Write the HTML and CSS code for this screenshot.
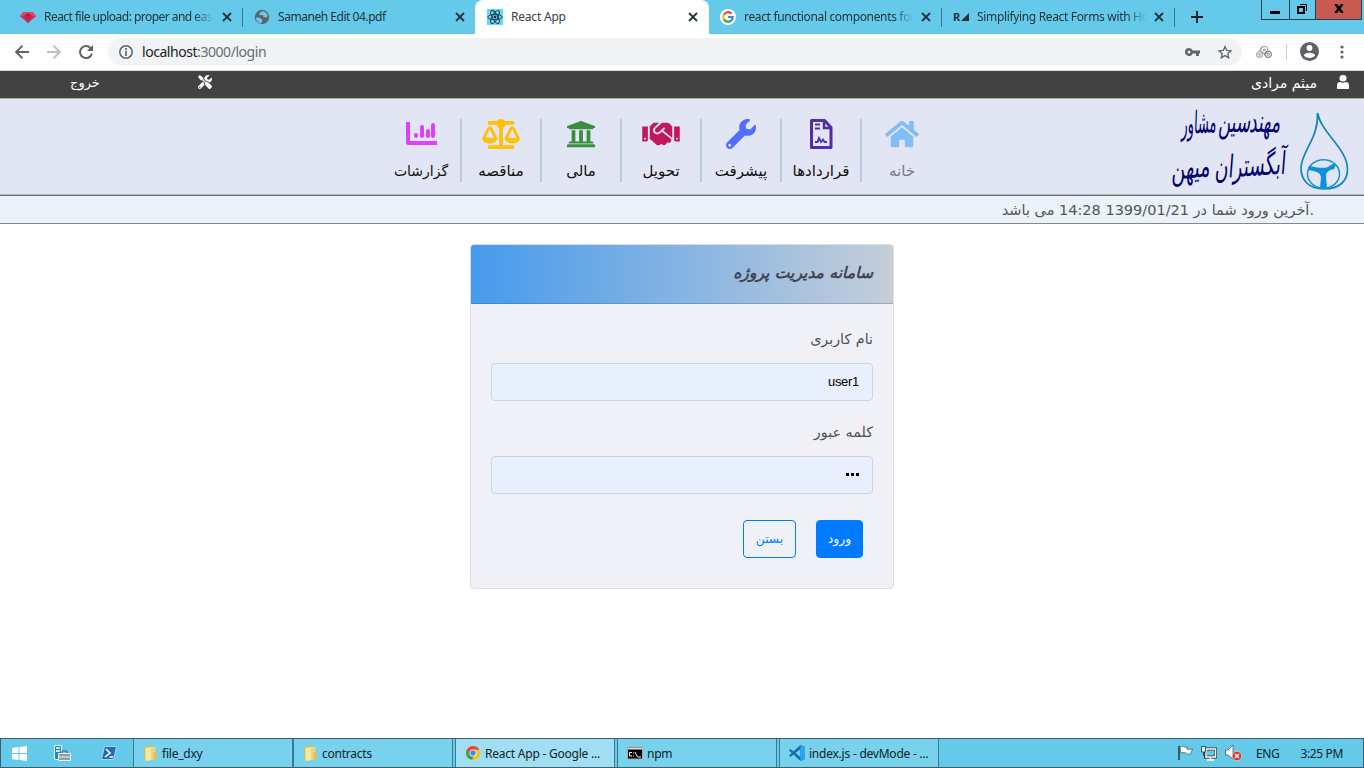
FILE: index.html
```html
<!DOCTYPE html>
<html lang="fa">
<head>
<meta charset="utf-8">
<title>React App</title>
<link rel="stylesheet" href="styles.css">
</head>
<body>
<div class="tabstrip">
  <div class="tab first"><svg class="fav" viewBox="0 0 16 16"><path fill="#e5416b" d="M3 3h10l3 4-8 7-8-7z"/><path fill="#a51d41" d="M4 7l4-3 4 3-4 7z"/><path fill="#c62c51" d="M0 7h16l-8 7z" opacity=".7"/></svg><span class="tab-title t1 fade">React file upload: proper and eas</span><svg class="x" viewBox="0 0 10 10"><path d="M1 1l8 8M9 1L1 9"/></svg></div>
  <div class="tab sep"><svg class="fav" viewBox="0 0 16 16"><circle cx="8" cy="8" r="7.2" fill="#5f6368"/><path fill="#65c9ea" d="M2 8.5l4 .2 2 1.8v2.5l-1 1.3C4 14 2 11.800 2 8.500zM8 2.200c3 0 5.500 2 5.800 5L12 8.500 9.500 8 9 6 6 6.200 5 4.500z"/></svg><span class="tab-title t2">Samaneh Edit 04.pdf</span><svg class="x" viewBox="0 0 10 10"><path d="M1 1l8 8M9 1L1 9"/></svg></div>
  <div class="tab active"><svg class="fav" viewBox="0 0 16 16"><path fill="#61dafb" d="M0 0h16v16H0z"/><g fill="none" stroke="#20313c" stroke-width=".9"><ellipse cx="8" cy="8" rx="7.200" ry="2.700"/><ellipse cx="8" cy="8" rx="7.200" ry="2.700" transform="rotate(60 8 8)"/><ellipse cx="8" cy="8" rx="7.200" ry="2.700" transform="rotate(120 8 8)"/></g><circle cx="8" cy="8" r="1.400" fill="#20313c"/></svg><span class="tab-title t3">React App</span><svg class="x" viewBox="0 0 10 10"><path d="M1 1l8 8M9 1L1 9"/></svg></div>
  <div class="tab"><svg class="fav" viewBox="0 0 16 16"><circle cx="8" cy="8" r="8" fill="#fff"/><g fill="none" stroke-width="2.200"><path stroke="#ea4335" d="M3.900 5.800A4.700 4.700 0 0 1 11.500 4.700"/><path stroke="#fbbc05" d="M3.900 5.600a4.700 4.700 0 0 0 0 4.800"/><path stroke="#34a853" d="M3.900 10.200a4.700 4.700 0 0 0 7.200 1.500"/><path stroke="#4285f4" d="M8 8h4.700a4.700 4.700 0 0 1-1.800 3.800"/></g></svg><span class="tab-title t4 fade">react functional components for</span><svg class="x" viewBox="0 0 10 10"><path d="M1 1l8 8M9 1L1 9"/></svg></div>
  <div class="tab sep"><span class="fav ra">R<svg viewBox="0 0 8 8"><path fill="#26343a" d="M8 0v8H0z"/></svg></span><span class="tab-title t5 fade">Simplifying React Forms with Ho</span><svg class="x" viewBox="0 0 10 10"><path d="M1 1l8 8M9 1L1 9"/></svg></div>
  <div class="newtab"><svg width="12" height="12" viewBox="0 0 12 12"><path d="M6 0v12M0 6h12" stroke="#202124" stroke-width="2"/></svg></div>
  <div class="wincontrols">
    <span class="min"><svg width="10" height="12" viewBox="0 0 10 12"><path d="M0 8h10v3H0z"/></svg></span>
    <span class="max"><svg width="10" height="10" viewBox="0 0 10 10"><path fill="none" stroke="#000" d="M3 .5h6.500V7"/><path fill="none" stroke="#000" stroke-width="2" d="M1 3h6v6H1z"/></svg></span>
    <span class="close"><svg width="10" height="9" viewBox="0 0 10 9"><path stroke="#000" stroke-width="2.600" d="M1.500 0l7 9M8.500 0l-7 9"/></svg></span>
  </div>
</div>
<div class="toolbar">
  <svg class="back" width="14" height="14" viewBox="0 0 14 14"><path d="M14 7H1.500M7.500.7L1.200 7l6.300 6.300" fill="none" stroke="#5f6368" stroke-width="1.900"/></svg>
  <svg class="fwd" width="14" height="14" viewBox="0 0 14 14"><path d="M0 7h12.500M6.500.7L12.800 7l-6.300 6.300" fill="none" stroke="#bcbec0" stroke-width="1.900"/></svg>
  <svg class="reload" width="14" height="14" viewBox="0 0 14 14"><path d="M11.600 3.100A6 6 0 1 0 12.900 8.500" fill="none" stroke="#5f6368" stroke-width="2"/><path fill="#5f6368" d="M14 0v6H8z"/></svg>
  <div class="omnibox">
    <svg class="info" width="14" height="14" viewBox="0 0 14 14"><circle cx="7" cy="7" r="6.200" fill="none" stroke="#5f6368" stroke-width="1.500"/><path d="M7 6v5M7 3v2" stroke="#5f6368" stroke-width="1.700"/></svg>
    <span class="url"><b>localhost</b>:3000/login</span>
    <svg class="key" width="15" height="8" viewBox="0 0 15 8"><path fill="#5f6368" fill-rule="evenodd" d="M4 0a4 4 0 0 1 3.700 2.600H15v2.900h-1.200V8H11V5.500H7.700A4 4 0 1 1 4 0zm0 2.500a1.500 1.500 0 1 0 0 3 1.500 1.500 0 0 0 0-3z"/></svg>
    <svg width="14" height="14" viewBox="0 0 14 14"><path fill="none" stroke="#5f6368" stroke-width="1.300" d="M7 1.500l1.700 3.900 4.300.4-3.200 2.800.9 4.200L7 10.600l-3.700 2.200.9-4.200L1 5.800l4.300-.4z"/></svg>
  </div>
  <svg class="ext" width="16" height="12" viewBox="0 0 16 12"><g fill="none" stroke="#a2a2a2" stroke-width="1.100"><circle cx="8.300" cy="4" r="3.500"/><circle cx="8.300" cy="4" r="1"/><path d="M3.500 5.500C4 3.500 5 1.500 7 .8M6 5.500l4 5"/><circle cx="3.500" cy="8.500" r="2.800"/><circle cx="3.500" cy="8.500" r=".8"/><circle cx="12.300" cy="8.300" r="3.100" stroke="#777"/><circle cx="12.300" cy="8.300" r="1.200"/></g></svg>
  <span class="vline"></span>
  <svg class="avatar" width="19" height="19" viewBox="0 0 19 19"><circle cx="9.500" cy="9.500" r="9.500" fill="#5f6368"/><circle cx="9.500" cy="6" r="2.900" fill="#fff"/><path fill="#fff" d="M3.800 13.300c1-3.400 10.400-3.400 11.400 0-2.400 3.700-9 3.700-11.400 0z"/></svg>
  <svg class="dots" width="4" height="14" viewBox="0 0 4 14"><g fill="#5f6368"><circle cx="2" cy="2" r="1.600"/><circle cx="2" cy="7" r="1.600"/><circle cx="2" cy="12" r="1.600"/></g></svg>
</div>
<div class="userbar">
  <span class="logout" dir="rtl">خروج</span>
  <svg class="tools" viewBox="0 0 512 512"><path d="M501.100 395.700L384 278.600c-23.100-23.100-57.600-27.600-85.400-13.900L192 158.100V96L64 0 0 64l96 128h62.100l106.600 106.600c-13.600 27.800-9.200 62.300 13.900 85.400l117.100 117.100c14.600 14.600 38.200 14.600 52.700 0l52.700-52.700c14.500-14.600 14.500-38.200 0-52.700zM331.700 225c28.300 0 54.900 11 74.900 31l19.400 19.400c15.800-6.900 30.800-16.500 43.800-29.500 37.100-37.100 49.700-89.300 37.900-136.700-2.200-9-13.500-12.100-20.100-5.500l-74.400 74.400-67.900-11.300L334 98.900l74.400-74.400c6.600-6.600 3.400-17.900-5.700-20.200-47.400-11.700-99.600.9-136.600 37.900-28.500 28.500-41.900 66.100-41.200 103.600l82.100 82.100c8.100-1.900 16.500-2.900 24.700-2.900zm-103.900 82l-56.700-56.700L18.700 402.800c-25 25-25 65.500 0 90.500s65.500 25 90.500 0l123.600-123.600c-7.600-19.900-9.900-41.600-5-62.700zM64 472c-13.200 0-24-10.800-24-24 0-13.300 10.700-24 24-24s24 10.700 24 24c0 13.200-10.700 24-24 24z"/></svg>
  <span class="username" dir="rtl">میثم مرادی</span>
  <svg class="user" width="12" height="14" viewBox="0 0 12 14"><ellipse cx="6" cy="3.200" rx="3.500" ry="3.200" fill="#fff"/><path fill="#fff" d="M0 14v-3.500Q0 7 3 7q3 1.400 6 0 3 0 3 3.500V14z"/></svg>
</div>
<header class="header">
  <nav class="nav">
    <a class="item reports"><svg width="32" height="28" viewBox="0 -2 32 28"><g fill="none" stroke="#e040fb" stroke-linecap="round" stroke-width="4"><path d="M3 3v19h27" stroke-linecap="square" stroke-linejoin="round"/><path d="M11 14v1M17 6v9M23 10v5M28 4v11"/></g></svg><span>گزارشات</span></a>
    <a class="item"><svg width="38" height="30" viewBox="0 0 640 512" fill="#ffc107"><path d="M256 336h-.02c0-16.180 1.340-8.730-85.050-181.510-17.650-35.290-68.190-35.360-85.870 0C-2.060 328.750.02 320.330.02 336H0c0 44.180 57.310 80 128 80s128-35.820 128-80zM128 176l72 144H56l72-144zm511.980 160c0-16.180 1.340-8.730-85.050-181.510-17.650-35.290-68.190-35.360-85.870 0-87.120 174.260-85.040 165.840-85.040 181.510H384c0 44.180 57.310 80 128 80s128-35.820 128-80h-.02zM440 320l72-144 72 144H440zm88 128H352V153.250c23.510-10.290 41.160-31.480 46.390-57.250H528c8.840 0 16-7.160 16-16V48c0-8.840-7.160-16-16-16H383.640C369.040 12.680 346.090 0 320 0s-49.040 12.680-63.640 32H112c-8.840 0-16 7.160-16 16v32c0 8.840 7.160 16 16 16h129.610c5.230 25.760 22.870 46.960 46.390 57.250V448H112c-8.840 0-16 7.160-16 16v32c0 8.840 7.160 16 16 16h416c8.840 0 16-7.160 16-16v-32c0-8.840-7.160-16-16-16z"/></svg><span>مناقصه</span></a>
    <a class="item"><svg width="30" height="30" viewBox="0 0 512 512" fill="#388e3c"><path d="M496 128v16a8 8 0 0 1-8 8h-24v12c0 6.627-5.373 12-12 12H60c-6.627 0-12-5.373-12-12v-12H24a8 8 0 0 1-8-8v-16a8 8 0 0 1 4.941-7.392l232-88a7.996 7.996 0 0 1 6.118 0l232 88A8 8 0 0 1 496 128zm-24 304H40c-13.255 0-24 10.745-24 24v16a8 8 0 0 0 8 8h464a8 8 0 0 0 8-8v-16c0-13.255-10.745-24-24-24zM96 192v192H60c-6.627 0-12 5.373-12 12v20h416v-20c0-6.627-5.373-12-12-12h-36V192h-64v192h-64V192h-64v192h-64V192H96z"/></svg><span>مالی</span></a>
    <a class="item"><svg width="38" height="30" viewBox="0 0 640 512" fill="#c2185b"><path d="M434.700 64h-85.900c-8 0-15.700 3-21.600 8.400l-98.300 90c-.1.1-.2.3-.3.4-16.600 15.600-16.300 40.500-2.100 56 12.700 13.900 39.400 17.600 56.100 2.700.1-.1.3-.1.4-.2l79.900-73.200c6.500-5.900 16.700-5.500 22.600 1 6 6.500 5.500 16.600-1 22.600l-26.100 23.900L504 313.800c2.900 2.400 5.500 5 7.900 7.700V128l-54.600-54.600c-5.900-6-14.100-9.400-22.600-9.400zM544 128.200v223.900c0 17.700 14.300 32 32 32h64V128.200h-96zm48 223.900c-8.800 0-16-7.200-16-16s7.200-16 16-16 16 7.200 16 16-7.200 16-16 16zM0 384h64c17.700 0 32-14.300 32-32V128.200H0V384zm48-63.900c8.800 0 16 7.200 16 16s-7.200 16-16 16-16-7.200-16-16c0-8.900 7.200-16 16-16zm435.900 18.600L334.600 217.500l-30 27.500c-29.700 27.100-75.200 24.500-101.700-4.400-26.900-29.400-24.800-74.900 4.400-101.700L289.100 64h-83.800c-8.500 0-16.600 3.400-22.600 9.400L128 128v223.900h18.300l90.500 81.900c27.400 22.300 67.700 18.100 90-9.300l.2-.2 17.900 15.500c15.900 13 39.400 10.500 52.300-5.400l31.400-38.600 5.400 4.400c13.700 11.100 33.900 9.100 45-4.700l9.500-11.700c11.200-13.800 9.100-33.900-4.600-45.100z"/></svg><span>تحویل</span></a>
    <a class="item"><svg width="30" height="30" viewBox="0 0 512 512" fill="#536dfe"><path d="M507.730 109.100c-2.240-9.030-13.540-12.090-20.120-5.510l-74.360 74.360-67.880-11.310-11.310-67.880 74.360-74.360c6.620-6.620 3.430-17.900-5.660-20.160-47.380-11.740-99.550.91-136.580 37.930-39.640 39.640-50.550 97.100-34.050 147.200L18.740 402.760c-24.990 24.990-24.990 65.510 0 90.500 24.990 24.990 65.510 24.990 90.500 0l213.210-213.210c50.120 16.710 107.470 5.680 147.370-34.220 37.070-37.070 49.700-89.320 37.910-136.730zM64 472c-13.250 0-24-10.750-24-24 0-13.260 10.750-24 24-24s24 10.740 24 24c0 13.250-10.750 24-24 24z"/></svg><span>پیشرفت</span></a>
    <a class="item"><svg width="24" height="30" viewBox="0 0 24 30" fill="none" stroke="#512da8"><path stroke-width="3" stroke-linejoin="round" d="M2.500 1.500h13l6.500 7v20H2.500z"/><path stroke-width="2.500" d="M15 1.500v7.500h7"/><path stroke-width="1.800" d="M6 5.500h5M6 9.500h5M6 23h2.500l1.500-4 2 4 2-2.500 1.500 2.500h2.500"/></svg><span>قراردادها</span></a>
    <a class="item home"><svg width="34" height="30" viewBox="0 0 576 512" fill="#82bdf5"><path d="M280.370 148.260L96 300.110V464a16 16 0 0 0 16 16l112.060-.29a16 16 0 0 0 15.920-16V368a16 16 0 0 1 16-16h64a16 16 0 0 1 16 16v95.640a16 16 0 0 0 16 16.050L464 480a16 16 0 0 0 16-16V300L295.670 148.260a12.190 12.190 0 0 0-15.300 0zM571.600 251.470L488 182.560V44.050a12 12 0 0 0-12-12h-56a12 12 0 0 0-12 12v72.610L318.470 43a48 48 0 0 0-61 0L4.340 251.470a12 12 0 0 0-1.600 16.900l25.500 31A12 12 0 0 0 45.150 301l235.220-193.740a12.190 12.190 0 0 1 15.300 0L530.900 301a12 12 0 0 0 16.900-1.600l25.500-31a12 12 0 0 0-1.700-16.930z"/></svg><span>خانه</span></a>
  </nav>
  <svg class="logo" width="190" height="92" viewBox="1164 100 190 92">
    <g class="calligraphy">
      <text x="1280" y="132" textLength="31" lengthAdjust="spacingAndGlyphs">مهند</text>
      <text x="1250" y="132" textLength="32" lengthAdjust="spacingAndGlyphs">سین</text>
      <text x="1216" y="132" textLength="35" lengthAdjust="spacingAndGlyphs" transform="rotate(-4 1216 128)">مشاور</text>
      <text x="1285" y="176" textLength="71" lengthAdjust="spacingAndGlyphs" transform="rotate(-4 1250 170)">آبگستران</text>
      <text x="1210" y="176" textLength="39" lengthAdjust="spacingAndGlyphs" transform="rotate(-6 1210 175)">میهن</text>
    </g>
    <path fill="none" stroke="#0c86bb" stroke-width="1.700" d="M1317.500 113c4 20 30 36 30 56 0 12-8 20-23.500 20s-23-9-23-21c0-16 18-30 16.500-55z"/>
    <ellipse cx="1323.500" cy="174" rx="16" ry="14.300" fill="none" stroke="#1794d6" stroke-width="1.500"/>
    <path fill="#0c8fdc" d="M1309 166c7 1 13 3 19 1 4-3 6-4 8-2l-2 4c-5 1-8 3-8 7l1 12h-7l1-10c0-6-6-7-13-8z"/>
  </svg>
</header>
<div class="lastlogin"><span class="ll">آخرین ورود شما در <bdi>14:28 1399/01/21</bdi> می باشد</span></div>
<main class="page">
  <section class="card" dir="rtl">
    <h5 class="card-header"><span>سامانه مدیریت پروژه</span></h5>
    <div class="card-body">
      <label>نام کاربری</label>
      <div class="input">user1</div>
      <label>کلمه عبور</label>
      <div class="input pass"><i></i><i></i><i></i></div>
      <div class="buttons"><button class="btn primary">ورود</button><button class="btn outline">بستن</button></div>
    </div>
  </section>
</main>
<footer class="taskbar">
  <div class="quick">
    <svg width="15" height="15" viewBox="0 0 15 15"><path fill="#fff" d="M0 2l6.500-.9V7H0zM7.500 1L15 0v7H7.500zM0 8h6.500v5.900L0 13zM7.500 8H15v7l-7.500-1z"/></svg>
    <svg width="17" height="17" viewBox="0 0 17 17"><path fill="#1c86bd" stroke="#e8f8ff" d="M.5.5h7v14h-7z"/><path stroke="#fff" stroke-width="1.500" d="M2 3h4M2 6h4"/><path fill="none" stroke="#43586a" d="M8 8V6h5v2"/><path fill="#8da0af" stroke="#eee" d="M4.500 8.500h12v7h-12z"/><path stroke="#eee" d="M4 12h12"/></svg>
    <svg width="16" height="14" viewBox="0 0 16 14"><path fill="#236bb3" stroke="#a8d3ef" d="M3.500.5h12l-3 13H.5z"/><path fill="none" stroke="#fff" stroke-width="1.600" d="M5 3l4 4-5 4M8.500 11H12"/></svg>
  </div>
  <div class="task"><svg class="folder" viewBox="0 0 14 16"><path fill="#e2b94d" d="M1 2l6-2v15l-6 1z"/><path fill="#f9e7a0" d="M2 3l6-1v13l-6 1z"/><path fill="#f4d477" d="M8 2h4v12l-4 1z"/><path fill="#e7bd54" d="M10 7h3v7l-3 1z"/></svg><span>file_dxy</span></div>
  <div class="task"><svg class="folder" viewBox="0 0 14 16"><path fill="#e2b94d" d="M1 2l6-2v15l-6 1z"/><path fill="#f9e7a0" d="M2 3l6-1v13l-6 1z"/><path fill="#f4d477" d="M8 2h4v12l-4 1z"/><path fill="#e7bd54" d="M10 7h3v7l-3 1z"/></svg><span>contracts</span></div>
  <div class="task current"><svg viewBox="0 0 16 16"><circle cx="8" cy="8" r="7" fill="#fbc116"/><path fill="#ea4335" d="M1.900 4.600A7 7 0 0 1 14.200 4.700H8L4.900 9.500z"/><path fill="#34a853" d="M1.900 4.600L5.200 10 8.500 11 7.200 15A7 7 0 0 1 1.900 4.600z"/><circle cx="8" cy="8" r="3.500" fill="#fff"/><circle cx="8" cy="8" r="2.700" fill="#4285f4"/></svg><span>React App - Google ...</span></div>
  <div class="task"><svg viewBox="0 0 16 13"><path fill="#000" stroke="#aaa" d="M.5.5h15v12H.5z"/><path fill="#ddd" d="M1 1h14v2H1z"/><path fill="none" stroke="#fff" d="M5 6H2.500v3.500H5M6.500 6v1M6.500 9v1M8 5.500l2.500 5M11 10.500h3"/></svg><span>npm</span></div>
  <div class="task"><svg viewBox="0 0 16 16"><path fill="#0f72b5" d="M11.500 0L16 2v12l-4.500 2L1 6.500 0 5l1.500-1 10 8V4l-10 8L0 11l1-1.500z"/><path fill="#2ca5e8" d="M11.500 0L16 2v12l-4.500 2z"/></svg><span>index.js - devMode - ...</span></div>
  <div class="tray">
    <svg width="15" height="14" viewBox="0 0 15 14"><path stroke="#333" stroke-width="1.500" d="M1 0v14"/><path fill="#fff" stroke="#44606c" stroke-width=".8" d="M2 1c3-2 4 1 7 0v2c2 1 4 0 5.500 0-1 2-1 3-2 5-3 1-4-1-5-1-2-1-3 0-5 0z"/></svg>
    <svg width="16" height="15" viewBox="0 0 16 15"><path fill="#65c9ea" stroke="#333" stroke-width="3" d="M4.500 3h10v8h-10z"/><path fill="none" stroke="#fff" stroke-width="1.500" d="M5 3h9.500v8H5zM9.500 11v2.500M6 14h7"/><path fill="#dff4fc" stroke="#333" stroke-width=".8" d="M.5.5h4V6h-4zM2.500 6v4"/></svg>
    <svg width="17" height="16" viewBox="0 0 17 16"><path fill="#fff" stroke="#555" stroke-width=".8" d="M.5 5H3l5-5v14L3 10H.5z"/><circle cx="12" cy="11" r="4.700" fill="#d33" stroke="#fff" stroke-width=".5"/><path stroke="#fff" stroke-width="1.500" d="M10 9l4 4M14 9l-4 4"/></svg>
    <span class="lang">ENG</span><span class="clock">3:25 PM</span>
  </div>
</footer>
</body>
</html>
```
FILE: styles.css
```css
* { box-sizing: border-box; }
body { margin: 0; width: 1364px; height: 768px; overflow: hidden; display: flex; flex-direction: column; background: #fff; font-family: "DejaVu Sans", sans-serif; }
svg { display: block; flex: none; }
.tabstrip, .toolbar, .taskbar { font-family: "Noto Sans", "Open Sans", sans-serif; }
.tabstrip { display: flex; height: 34px; flex: none; background: #65c9ea; padding-left: 9px; }
.tab { display: flex; width: 233px; height: 34px; align-items: center; padding-left: 12px; color: #20343c; font-size: 12px; }
.tab.first { padding-left: 11px; }
.tab.sep { background: linear-gradient(#39788f, #39788f) 0 8px / 1px 19px no-repeat; }
.tab.active { background: #fff; border-radius: 8px 8px 0 0; color: #3c4043; width: 234px; margin-right: -1px; }
.fav { width: 16px; height: 16px; margin-right: 8px; flex: none; }
.ra { display: flex; align-items: center; gap: 1px; font: 700 11px/16px "Noto Sans", sans-serif; }
.ra svg { width: 8px; height: 8px; }
.tab-title { width: 170px; flex: none; white-space: nowrap; line-height: 18px; }
.t1 { letter-spacing: -0.53px; }
.t2 { letter-spacing: -0.46px; }
.t3 { letter-spacing: -0.2px; }
.t4 { letter-spacing: -0.34px; }
.t5 { letter-spacing: -0.34px; }
.fade { mask-image: linear-gradient(90deg, #000 88%, transparent); }
.x { width: 10px; height: 10px; margin-left: 7px; stroke: #20343c; stroke-width: 1.8; }
.first .x { margin-left: 8px; }
.newtab { display: flex; align-items: center; width: 87px; padding-left: 17px; background: linear-gradient(#39788f, #39788f) 0 8px / 1px 19px no-repeat; }
.wincontrols { display: flex; height: 20px; width: 101px; border: 1px solid #23424d; border-top: 0; }
.wincontrols span { display: flex; align-items: center; justify-content: center; padding-bottom: 2px; }
.wincontrols .min { width: 27px; padding-right: 1px; }
.wincontrols .max { width: 27px; padding-right: 1px; border: solid #23424d; border-width: 0 1px; }
.wincontrols .close { flex: 1; background: #c75b51; }
.toolbar { display: flex; align-items: center; height: 37px; flex: none; padding: 0 20px 1px 15px; border-bottom: 1px solid #d5d7d9; }
.fwd { margin-left: 18px; }
.reload { margin-left: 18px; }
.omnibox { display: flex; align-items: center; width: 1135px; height: 28px; margin-left: 15px; border-radius: 14px; background: #f1f3f4; padding: 0 10px 0 11px; }
.url { flex: 1; margin-left: 9px; font-size: 14px; line-height: 20px; letter-spacing: -0.45px; color: #696d71; }
.url b { font-weight: 400; color: #202124; }
.key { margin-right: 18px; }
.ext { margin-left: 14px; }
.vline { width: 1px; height: 16px; margin-left: 14px; background: #ccc; }
.avatar { margin-left: 13px; }
.dots { margin-left: 21px; }
.userbar { display: flex; height: 28px; flex: none; background: #424242; border-bottom: 1px solid #aaa; color: #fff; fill: #fff; padding: 3px 15px 0 70px; font-size: 14px; line-height: 18px; }
.logout { width: 128px; direction: ltr; text-align: left; font-size: 13px; }
.tools { width: 14px; height: 14px; margin-top: 1px; }
.username { margin-left: auto; }
.user { margin-left: 20px; margin-top: 1px; }
.header { display: flex; height: 97px; flex: none; background: #e2e5f4; border-bottom: 1px solid #666a70; box-shadow: inset 0 -1px #b5b8c3; padding-left: 382px; }
.nav { display: flex; padding-top: 20px; }
.item { width: 80px; height: 63px; border-right: 2px solid #b9cbdf; display: flex; flex-direction: column; align-items: center; color: #111; font-size: 15px; }
.item svg { margin-bottom: auto; }
.item span { line-height: 20px; margin-bottom: 1px; white-space: nowrap; }
.item.reports { font-size: 14px; }
.item.home { border: 0; color: #777a85; }
.logo { margin-left: 222px; margin-top: 1px; }
.calligraphy { fill: #000070; font-family: "DejaVu Sans", sans-serif; font-style: italic; font-size: 31px; direction: rtl; }
.lastlogin { height: 28px; flex: none; background: #ebf2fa; border-bottom: 1px solid #888; padding: 3px 50px 0 0; direction: ltr; text-align: right; font-size: 14.5px; line-height: 22px; color: #555; }
.ll { display: inline-block; direction: rtl; }
.ll::before { content: "."; }
.page { flex: 1; display: flex; justify-content: center; align-items: flex-start; padding-top: 20px; }
.card { width: 424px; height: 345px; border: 1px solid #dcdde2; border-radius: 4px; background: #f0f1f7; overflow: hidden; }
.card-header { margin: 0; height: 59px; padding: 17px 20px; border-bottom: 1px solid rgba(40,90,140,.3); background: linear-gradient(90deg, #469aec, #c6ced9); color: #404754; font-size: 15.6px; line-height: 22px; font-style: italic; }
.card-body { padding: 24px 20px; font-size: 14.3px; color: #505158; }
.card-body label { display: block; height: 35px; line-height: 22px; }
.input { height: 38px; border: 1px solid #ced4da; border-radius: 4px; background: #e8f0fe; margin-bottom: 20px; padding: 0 13px; font: 13px/36px "Liberation Sans", sans-serif; letter-spacing: -0.3px; color: #000; }
.pass { display: flex; align-items: center; gap: 2px; padding-bottom: 2px; }
.pass i { width: 3px; height: 3px; background: #000; }
.buttons { display: flex; gap: 20px; padding-right: 10px; margin-top: 26px; }
.btn { width: 47px; height: 38px; padding: 0; border: 1px solid #007bff; border-radius: 4px; font: 12.3px "DejaVu Sans", sans-serif; }
.primary { background: #007bff; color: #fff; }
.outline { width: 53px; background: transparent; color: #007bff; }
.taskbar { display: flex; height: 30px; flex: none; background: #65c9ea; border: 1px solid #3e5d69; font-size: 12px; color: #102229; }
.quick { width: 132px; display: flex; align-items: center; gap: 27px; padding-left: 11px; }
.quick svg:last-child { margin-left: 3px; }
.task { width: 160px; display: flex; align-items: center; gap: 4px; padding-left: 9px; background: #78d1ed; border: solid #397b91; border-width: 0 1px; white-space: nowrap; margin-right: 2px; letter-spacing: -0.23px; }
.task:nth-child(2) { margin-right: 0; }
.task svg { width: 16px; height: 16px; }
.task .folder { width: 15px; }
.task.current { background: #a0dff3; }
.tray { display: flex; align-items: center; margin-left: auto; gap: 8px; padding-right: 20px; letter-spacing: -0.35px; }
.lang { margin-left: 6px; }
.clock { margin-left: 13px; }
```
